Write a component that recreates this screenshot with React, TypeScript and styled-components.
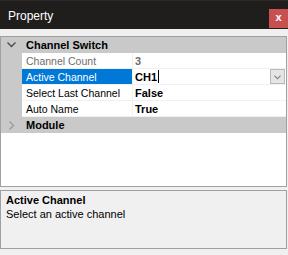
import styled, { createGlobalStyle } from 'styled-components';

const GlobalStyle = createGlobalStyle`
  html, body {
    margin: 0;
    padding: 0;
    background: #f0f0f0;
  }
  body {
    font-family: 'Liberation Sans', Arial, sans-serif;
  }
`;

const Window = styled.div`
  width: 288px;
  height: 255px;
  display: flex;
  flex-direction: column;
  background: #f0f0f0;
  overflow: hidden;
`;

const TitleBar = styled.div`
  height: 29px;
  flex: none;
  display: flex;
  justify-content: space-between;
  background: #1f1e1d;
  border-top: 1px solid #2b2a29;
  box-sizing: border-box;
`;

const Title = styled.span`
  align-self: center;
  padding-left: 8px;
  margin-top: 1px;
  color: #ffffff;
  font-size: 12px;
`;

const CloseButton = styled.div`
  align-self: flex-end;
  margin-bottom: 1px;
  width: 19px;
  height: 19px;
  display: flex;
  align-items: center;
  justify-content: center;
  background: #c75050;
  color: #ffffff;
  font-size: 11px;
  font-weight: bold;
  line-height: 1;
  padding-bottom: 2px;
  box-sizing: border-box;
`;

const Body = styled.div`
  flex: 1;
  display: flex;
  flex-direction: column;
  gap: 3px;
  padding: 7px 1px 7px 0;
`;

const Grid = styled.div`
  height: 151px;
  flex: none;
  box-sizing: border-box;
  border: 1px solid #a0a0a0;
  background: #ffffff;
  font-size: 10.5px;
`;

const Row = styled.div`
  display: grid;
  grid-template-columns: 21px 111px 1fr;
  height: 16px;
`;

const Category = styled.div`
  display: grid;
  grid-template-columns: 21px 1fr;
  height: 16px;
  background: #c9c9c9;
  font-weight: bold;
  font-size: 11px;
  color: #000000;
  align-items: center;
`;

const Gutter = styled.div`
  background: #c9c9c9;
  display: flex;
  align-items: center;
  justify-content: center;
`;

const CategoryLabel = styled.span`
  padding-left: 4px;
`;

const NameCell = styled.div<{ $selected?: boolean; $disabled?: boolean }>`
  display: flex;
  align-items: center;
  padding-left: 4px;
  border-right: 1px solid #f0f0f0;
  border-bottom: 1px solid #f0f0f0;
  background: ${(p) => (p.$selected ? '#0078d7' : '#ffffff')};
  color: ${(p) => (p.$selected ? '#ffffff' : p.$disabled ? '#6d6d6d' : '#000000')};
  white-space: nowrap;
`;

const ValueCell = styled.div<{ $disabled?: boolean }>`
  display: flex;
  align-items: center;
  padding-left: 2px;
  border-bottom: 1px solid #f0f0f0;
  font-weight: bold;
  font-size: 11px;
  color: ${(p) => (p.$disabled ? '#6d6d6d' : '#000000')};
`;

const Caret = styled.span`
  width: 1px;
  height: 13px;
  background: #000000;
  margin-left: 1px;
`;

const DropButton = styled.div`
  margin-left: auto;
  margin-right: 1px;
  width: 15px;
  height: 15px;
  box-sizing: border-box;
  border: 1px solid #b9b9b9;
  background: #e5e5e5;
  display: flex;
  align-items: center;
  justify-content: center;
  padding-top: 2px;
`;

const Description = styled.div`
  height: 59px;
  flex: none;
  box-sizing: border-box;
  border: 1px solid #a0a0a0;
  background: #f0f0f0;
  padding: 2px 5px;
  font-size: 11px;
  color: #000000;
`;

const DescTitle = styled.div`
  font-weight: bold;
  line-height: 14px;
`;

const DescText = styled.div`
  line-height: 14px;
`;

const ChevronDown = ({ color, size = 9 }: { color: string; size?: number }) => (
  <svg width={size} height={Math.round(size / 2) + 1} viewBox="0 0 9 6">
    <path d="M0.5 0.5 L4.5 4.5 L8.5 0.5" fill="none" stroke={color} strokeWidth="1.3" />
  </svg>
);

const ChevronRight = ({ color }: { color: string }) => (
  <svg width="6" height="9" viewBox="0 0 6 9">
    <path d="M0.5 0.5 L4.5 4.5 L0.5 8.5" fill="none" stroke={color} strokeWidth="1.3" />
  </svg>
);

type Prop = {
  name: string;
  value: string;
  selected?: boolean;
  disabled?: boolean;
  editing?: boolean;
};

const props: Prop[] = [
  { name: 'Channel Count', value: '3', disabled: true },
  { name: 'Active Channel', value: 'CH1', selected: true, editing: true },
  { name: 'Select Last Channel', value: 'False' },
  { name: 'Auto Name', value: 'True' },
];

function App() {
  return (
    <Window>
      <GlobalStyle />
      <TitleBar>
        <Title>Property</Title>
        <CloseButton>x</CloseButton>
      </TitleBar>
      <Body>
        <Grid>
          <Category>
            <Gutter>
              <ChevronDown color="#4a4a4a" />
            </Gutter>
            <CategoryLabel>Channel Switch</CategoryLabel>
          </Category>
          {props.map((p) => (
            <Row key={p.name}>
              <Gutter />
              <NameCell $selected={p.selected} $disabled={p.disabled}>
                {p.name}
              </NameCell>
              <ValueCell $disabled={p.disabled}>
                {p.value}
                {p.editing && <Caret />}
                {p.editing && (
                  <DropButton>
                    <ChevronDown color="#808080" size={7} />
                  </DropButton>
                )}
              </ValueCell>
            </Row>
          ))}
          <Category>
            <Gutter>
              <ChevronRight color="#9a9a9a" />
            </Gutter>
            <CategoryLabel>Module</CategoryLabel>
          </Category>
        </Grid>
        <Description>
          <DescTitle>Active Channel</DescTitle>
          <DescText>Select an active channel</DescText>
        </Description>
      </Body>
    </Window>
  );
}

export default App;
